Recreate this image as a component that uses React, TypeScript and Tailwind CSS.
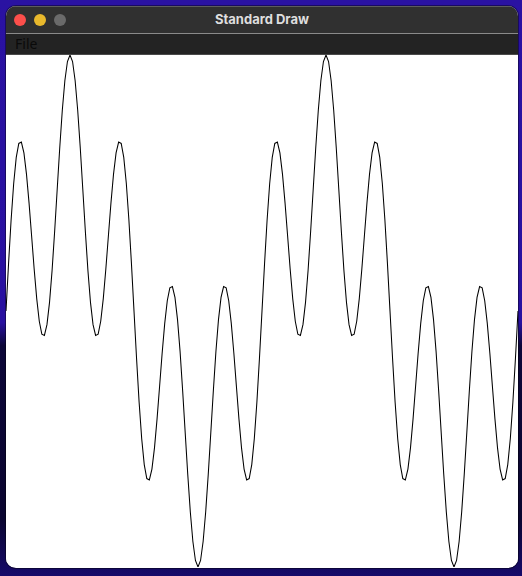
import React from "react";

function Wave() {
  const n = 200;
  const pts: string[] = [];
  for (let i = 0; i <= n; i++) {
    const x = (Math.PI * i) / n;
    const y = Math.sin(4 * x) + Math.sin(20 * x);
    const px = (512 * i) / n;
    const py = 256 - 128 * y;
    pts.push(`${px.toFixed(2)},${py.toFixed(2)}`);
  }
  return (
    <svg width="512" height="512" viewBox="0 0 512 512" className="block">
      <polyline points={pts.join(" ")} fill="none" stroke="#000" strokeWidth="1.05" />
    </svg>
  );
}

export default function App() {
  return (
    <div className="w-[522px] h-[576px] overflow-hidden bg-[linear-gradient(180deg,#2a12a2_0%,#2810a0_56%,#0c0638_60%,#0a0530_90%,#160a6a_100%)] pt-[6px] pl-[6px]">
      <div className="w-[512px] h-[562px] rounded-[10px] overflow-hidden flex flex-col bg-white shadow-[0_0_0_1px_rgba(0,0,0,0.4)]">
        <div className="relative h-[28px] shrink-0 bg-[#303030] border-b border-[#8a8a8a] shadow-[inset_0_1px_0_#5c5c5c] flex items-center">
          <div className="flex items-center gap-[8px] pl-[8px]">
            <span className="w-[12px] h-[12px] rounded-full bg-[#fd4f4b]" />
            <span className="w-[12px] h-[12px] rounded-full bg-[#e8b82c]" />
            <span className="w-[12px] h-[12px] rounded-full bg-[#6a6a6a]" />
          </div>
          <div className="absolute inset-0 flex items-center justify-center text-[13px] font-bold text-[#dedede] font-['Inter','Liberation_Sans',sans-serif]">
            Standard Draw
          </div>
        </div>
        <div className="h-[21px] shrink-0 bg-[#232323] border-b border-[#4a4a4a] flex items-center pl-[9px]">
          <span className="text-[14px] leading-none text-[#0a0a0a] font-['Noto_Sans','Liberation_Sans',sans-serif]">File</span>
        </div>
        <div className="h-[512px] w-[512px] bg-white">
          <Wave />
        </div>
      </div>
    </div>
  );
}
